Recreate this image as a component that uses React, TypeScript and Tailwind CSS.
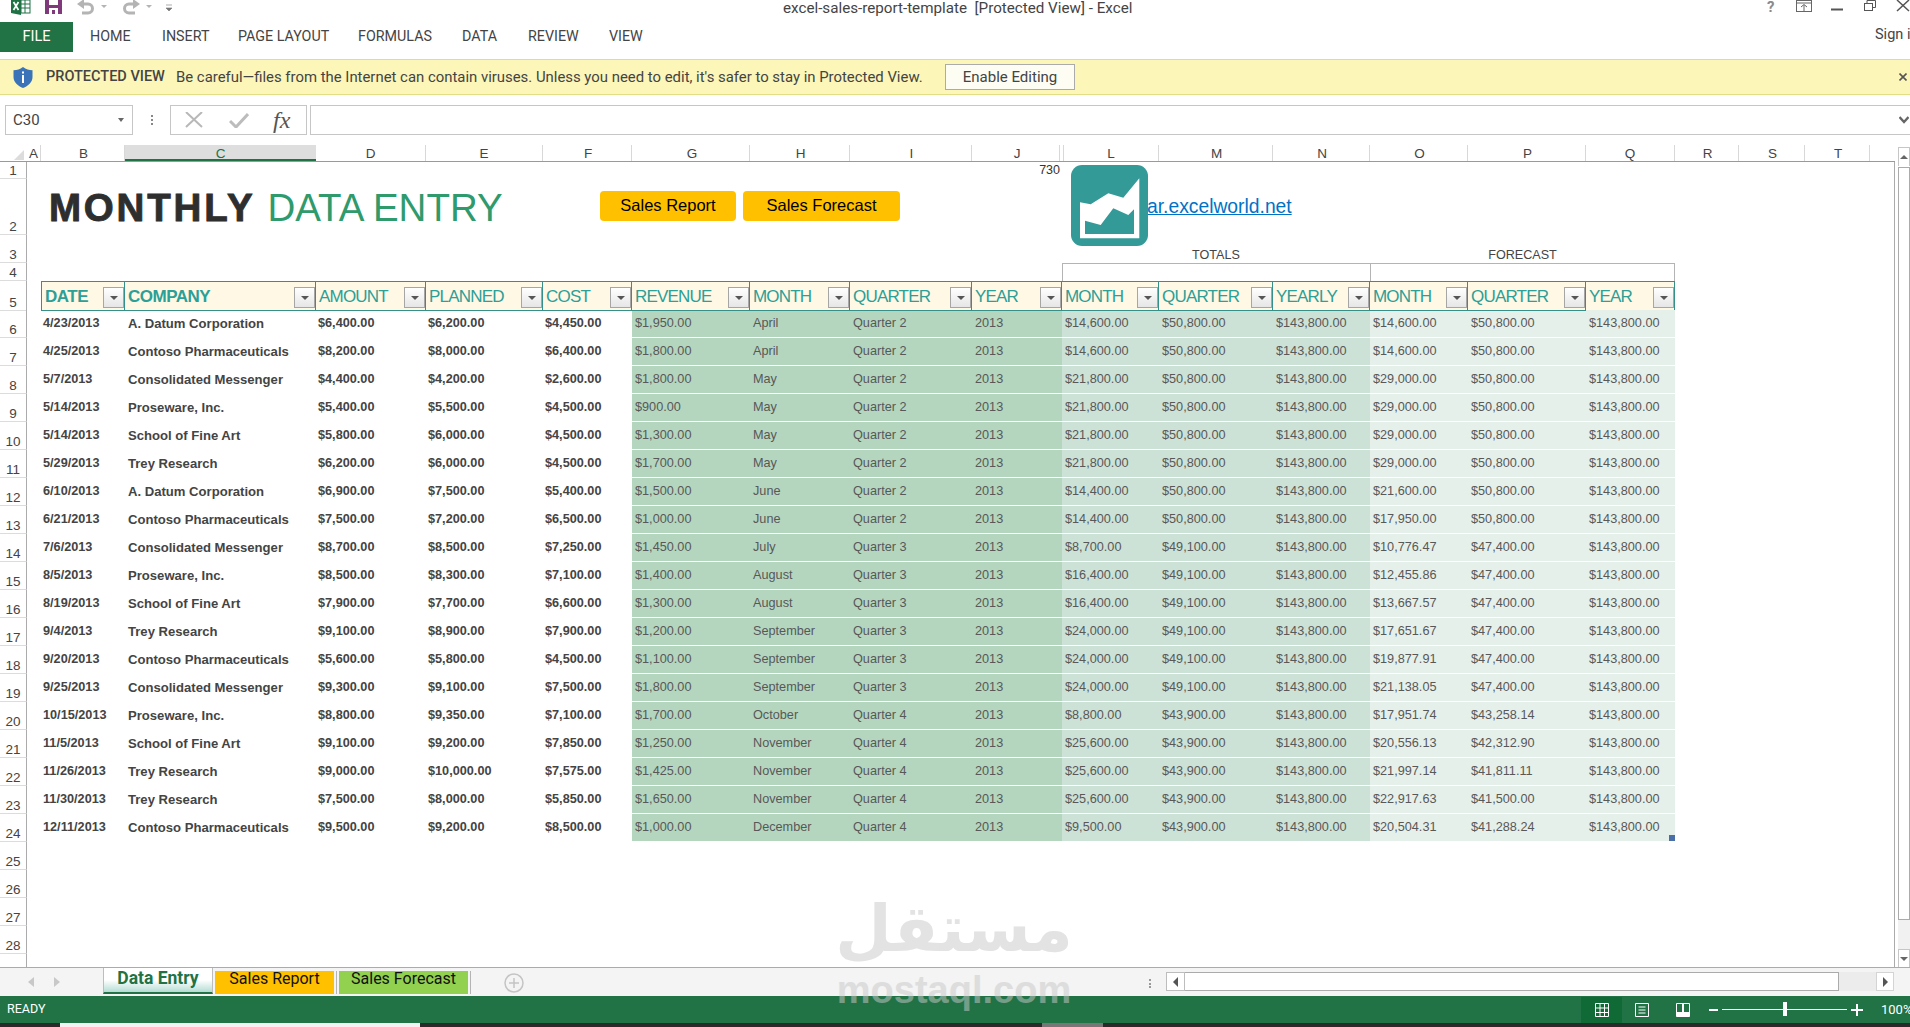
import React from "react";

const COLS = "grid grid-cols-[27px_14px_84px_191px_110px_117px_89px_118px_100px_122px_90px_97px_114px_97px_98px_118px_89px_64px_66px_65px_25px]";

const HEADS = [
  { l: "A", c: "w-[14px]" }, { l: "B", c: "w-[84px] pl-[2px]" }, { l: "C", c: "w-[191px]", sel: true }, { l: "D", c: "w-[110px]" },
  { l: "E", c: "w-[117px]" }, { l: "F", c: "w-[89px] pl-[2px]" }, { l: "G", c: "w-[118px] pl-[3px]" }, { l: "H", c: "w-[100px] pl-[2px]" },
  { l: "I", c: "w-[122px] pl-[2px]" }, { l: "J", c: "w-[88px] pl-[3px]" }, { l: "", c: "w-[4px]" }, { l: "L", c: "w-[95px]" },
  { l: "M", c: "w-[114px] pl-[2px]" }, { l: "N", c: "w-[97px] pl-[2px]" }, { l: "O", c: "w-[98px] pl-[2px]" }, { l: "P", c: "w-[118px] pl-[2px]" },
  { l: "Q", c: "w-[89px]" }, { l: "R", c: "w-[64px] pl-[2px]" }, { l: "S", c: "w-[66px] pl-[2px]" }, { l: "T", c: "w-[65px] pl-[2px]" },
];

const TH: [string, boolean][] = [
  ["DATE", true], ["COMPANY", true], ["AMOUNT", false], ["PLANNED", false], ["COST", false], ["REVENUE", false],
  ["MONTH", false], ["QUARTER", false], ["YEAR", false], ["MONTH", false], ["QUARTER", false], ["YEARLY", false],
  ["MONTH", false], ["QUARTER", false], ["YEAR", false],
];

const ROWS: string[][] = [
  ["4/23/2013", "A. Datum Corporation", "$6,400.00", "$6,200.00", "$4,450.00", "$1,950.00", "April", "Quarter 2", "$14,600.00", "$50,800.00", "$14,600.00", "$50,800.00"],
  ["4/25/2013", "Contoso Pharmaceuticals", "$8,200.00", "$8,000.00", "$6,400.00", "$1,800.00", "April", "Quarter 2", "$14,600.00", "$50,800.00", "$14,600.00", "$50,800.00"],
  ["5/7/2013", "Consolidated Messenger", "$4,400.00", "$4,200.00", "$2,600.00", "$1,800.00", "May", "Quarter 2", "$21,800.00", "$50,800.00", "$29,000.00", "$50,800.00"],
  ["5/14/2013", "Proseware, Inc.", "$5,400.00", "$5,500.00", "$4,500.00", "$900.00", "May", "Quarter 2", "$21,800.00", "$50,800.00", "$29,000.00", "$50,800.00"],
  ["5/14/2013", "School of Fine Art", "$5,800.00", "$6,000.00", "$4,500.00", "$1,300.00", "May", "Quarter 2", "$21,800.00", "$50,800.00", "$29,000.00", "$50,800.00"],
  ["5/29/2013", "Trey Research", "$6,200.00", "$6,000.00", "$4,500.00", "$1,700.00", "May", "Quarter 2", "$21,800.00", "$50,800.00", "$29,000.00", "$50,800.00"],
  ["6/10/2013", "A. Datum Corporation", "$6,900.00", "$7,500.00", "$5,400.00", "$1,500.00", "June", "Quarter 2", "$14,400.00", "$50,800.00", "$21,600.00", "$50,800.00"],
  ["6/21/2013", "Contoso Pharmaceuticals", "$7,500.00", "$7,200.00", "$6,500.00", "$1,000.00", "June", "Quarter 2", "$14,400.00", "$50,800.00", "$17,950.00", "$50,800.00"],
  ["7/6/2013", "Consolidated Messenger", "$8,700.00", "$8,500.00", "$7,250.00", "$1,450.00", "July", "Quarter 3", "$8,700.00", "$49,100.00", "$10,776.47", "$47,400.00"],
  ["8/5/2013", "Proseware, Inc.", "$8,500.00", "$8,300.00", "$7,100.00", "$1,400.00", "August", "Quarter 3", "$16,400.00", "$49,100.00", "$12,455.86", "$47,400.00"],
  ["8/19/2013", "School of Fine Art", "$7,900.00", "$7,700.00", "$6,600.00", "$1,300.00", "August", "Quarter 3", "$16,400.00", "$49,100.00", "$13,667.57", "$47,400.00"],
  ["9/4/2013", "Trey Research", "$9,100.00", "$8,900.00", "$7,900.00", "$1,200.00", "September", "Quarter 3", "$24,000.00", "$49,100.00", "$17,651.67", "$47,400.00"],
  ["9/20/2013", "Contoso Pharmaceuticals", "$5,600.00", "$5,800.00", "$4,500.00", "$1,100.00", "September", "Quarter 3", "$24,000.00", "$49,100.00", "$19,877.91", "$47,400.00"],
  ["9/25/2013", "Consolidated Messenger", "$9,300.00", "$9,100.00", "$7,500.00", "$1,800.00", "September", "Quarter 3", "$24,000.00", "$49,100.00", "$21,138.05", "$47,400.00"],
  ["10/15/2013", "Proseware, Inc.", "$8,800.00", "$9,350.00", "$7,100.00", "$1,700.00", "October", "Quarter 4", "$8,800.00", "$43,900.00", "$17,951.74", "$43,258.14"],
  ["11/5/2013", "School of Fine Art", "$9,100.00", "$9,200.00", "$7,850.00", "$1,250.00", "November", "Quarter 4", "$25,600.00", "$43,900.00", "$20,556.13", "$42,312.90"],
  ["11/26/2013", "Trey Research", "$9,000.00", "$10,000.00", "$7,575.00", "$1,425.00", "November", "Quarter 4", "$25,600.00", "$43,900.00", "$21,997.14", "$41,811.11"],
  ["11/30/2013", "Trey Research", "$7,500.00", "$8,000.00", "$5,850.00", "$1,650.00", "November", "Quarter 4", "$25,600.00", "$43,900.00", "$22,917.63", "$41,500.00"],
  ["12/11/2013", "Contoso Pharmaceuticals", "$9,500.00", "$9,200.00", "$8,500.00", "$1,000.00", "December", "Quarter 4", "$9,500.00", "$43,900.00", "$20,504.31", "$41,288.24"],
];

const TABS = [
  { t: "HOME", c: "w-[72px]" }, { t: "INSERT", c: "w-[76px]" }, { t: "PAGE LAYOUT", c: "w-[120px]" },
  { t: "FORMULAS", c: "w-[104px]" }, { t: "DATA", c: "w-[66px]" }, { t: "REVIEW", c: "w-[81px]" }, { t: "VIEW", c: "w-[50px]" },
];

function RowNum({ n }: { n: number | string }) {
  return (
    <div className="flex items-end justify-center border-r border-b border-r-[#ababab] border-b-[#dcdcdc] text-[13.5px] leading-[14px] text-[#444]">
      {n}
    </div>
  );
}

function FilterBtn() {
  return (
    <span className="absolute right-0 bottom-[2px] flex h-[21px] w-[21px] items-center justify-center border border-[#a6a6a6] bg-gradient-to-b from-white to-[#e6e6e6]">
      <span className="mt-[1px] h-0 w-0 border-x-[4px] border-t-[4px] border-x-transparent border-t-[#555]" />
    </span>
  );
}

function Cell({ children, bg, bold, wide }: { children?: React.ReactNode; bg?: string; bold?: boolean; wide?: boolean }) {
  return (
    <div
      className={`flex items-center overflow-visible whitespace-nowrap border-b border-white pt-[1px] ${wide ? "pl-[3px] text-[13.1px]" : bold ? "pl-[2px] text-[12.7px]" : "pl-[3px] text-[12.7px]"} ${bold ? "font-bold text-[#444]" : "font-normal text-[#585858]"} ${bg ?? ""}`}
    >
      {children}
    </div>
  );
}

function TitleBar() {
  return (
    <div className="flex h-[22px] items-start font-['Roboto',sans-serif]">
      <svg width="180" height="16" viewBox="0 0 180 16" className="shrink-0">
        <rect x="21" y="0" width="9" height="13" fill="#fff" stroke="#1f7244" />
        <path d="M21 4H30M21 8H30M25 0V13" stroke="#1f7244" strokeWidth="1" />
        <path d="M11 0H21V15L11 13Z" fill="#1f7244" />
        <path d="M13.5 2L18.5 10M18.5 2L13.5 10" stroke="#fff" strokeWidth="1.7" />
        <path d="M45 0H62V14H45Z" fill="#80397b" />
        <path d="M49 0H58V5H49Z" fill="#fff" />
        <path d="M49 8H58V14H49Z" fill="#fff" />
        <path d="M52 10H55V14H52Z" fill="#80397b" />
        <path d="M77 4L84 -1V9Z" fill="#b4b4b4" />
        <path d="M82 4H88A4.5 4.5 0 0 1 88 13H82" fill="none" stroke="#b4b4b4" strokeWidth="3" />
        <path d="M101 5H107L104 8Z" fill="#b4b4b4" />
        <path d="M140 4L133 -1V9Z" fill="#b4b4b4" />
        <path d="M135 4H129A4.5 4.5 0 0 0 129 13H135" fill="none" stroke="#b4b4b4" strokeWidth="3" />
        <path d="M146 5H152L149 8Z" fill="#b4b4b4" />
        <path d="M166 5H172M166 8H172L169 11Z" fill="#777" stroke="#777" strokeWidth="0.6" />
      </svg>
      <div className="ml-[603px] whitespace-pre text-[15.2px] leading-[16px] text-[#444]">excel-sales-report-template  [Protected View] - Excel</div>
      <svg width="150" height="16" viewBox="0 0 150 16" className="ml-auto shrink-0">
        <text x="7" y="12" fontFamily="Roboto, sans-serif" fontWeight="700" fontSize="15" fill="#8a8a8a">?</text>
        <rect x="36.5" y="0.5" width="15" height="11" fill="none" stroke="#666" />
        <path d="M37 3H51M44 11V5M41 7L44 4.5L47 7" fill="none" stroke="#666" />
        <path d="M71 9.5H83" stroke="#555" strokeWidth="2" />
        <rect x="104.5" y="3.5" width="8" height="7" fill="#fff" stroke="#555" />
        <path d="M107 3V0.5H115.5V7.5H113" fill="none" stroke="#555" />
        <path d="M137 0L149 11M149 0L137 11" stroke="#555" strokeWidth="1.5" />
      </svg>
    </div>
  );
}

function RibbonTabs() {
  return (
    <div className="flex h-[30px] items-center font-['Roboto',sans-serif] text-[14.3px] text-[#444]">
      <div className="mr-[17px] flex h-full w-[73px] items-center justify-center bg-[#217346] text-[14.5px] text-white">FILE</div>
      {TABS.map((t) => (
        <div key={t.t} className={`${t.c} whitespace-nowrap`}>{t.t}</div>
      ))}
      <div className="ml-auto w-[35px] overflow-hidden whitespace-nowrap text-[14.5px] -mt-[4px]">Sign in</div>
    </div>
  );
}

function ProtectedBar() {
  return (
    <div className="mt-[7px] flex h-[36px] items-center border-y border-[#e2de85] bg-[#fcf6b8] font-['Roboto',sans-serif] text-[14.9px] text-[#444]">
      <svg width="20" height="21" viewBox="0 0 20 21" className="ml-[13px] mr-[13px] shrink-0">
        <path d="M10 0C7 2.5 4 3 0.5 3.2V10C0.5 15.5 5 19 10 21C15 19 19.5 15.5 19.5 10V3.2C16 3 13 2.5 10 0Z" fill="#3b73b9" />
        <rect x="9" y="8" width="2" height="8" fill="#fff" />
        <rect x="9" y="4.5" width="2" height="2" fill="#fff" />
      </svg>
      <span className="w-[130px] text-[14.5px] font-medium whitespace-nowrap">PROTECTED VIEW</span>
      <span className="w-[769px] whitespace-nowrap">Be careful—files from the Internet can contain viruses. Unless you need to edit, it's safer to stay in Protected View.</span>
      <button className="flex h-[26px] w-[130px] items-center justify-center border border-[#ababab] bg-[#fdfdf3] text-[15px] text-[#444]">Enable Editing</button>
      <svg width="8" height="8" viewBox="0 0 8 8" className="ml-auto mr-[3px]">
        <path d="M0.5 0.5L7.5 7.5M7.5 0.5L0.5 7.5" stroke="#555" strokeWidth="1.6" />
      </svg>
    </div>
  );
}

function FormulaBar() {
  return (
    <div className="mt-[10px] flex h-[30px] font-['Roboto',sans-serif]">
      <div className="ml-[5px] flex w-[128px] items-center justify-between border border-[#c6c6c6] pl-[7px] pr-[8px] text-[15px] text-[#444]">
        C30
        <span className="h-0 w-0 border-x-[3.5px] border-t-[4px] border-x-transparent border-t-[#666]" />
      </div>
      <div className="flex w-[37px] flex-col items-center justify-center gap-[2px]">
        <span className="h-[2px] w-[2px] bg-[#888]" />
        <span className="h-[2px] w-[2px] bg-[#888]" />
        <span className="h-[2px] w-[2px] bg-[#888]" />
      </div>
      <div className="flex w-[137px] items-center border border-[#c6c6c6] pl-[13px]">
        <svg width="20" height="16" viewBox="0 0 20 16" className="mr-[25px]">
          <path d="M2 0L18 15M18 0L2 15" stroke="#b8b8b8" strokeWidth="2" />
        </svg>
        <svg width="20" height="16" viewBox="0 0 20 16" className="mr-[24px]">
          <path d="M1 9L7 15L19 2" fill="none" stroke="#bcbcbc" strokeWidth="3" />
        </svg>
        <span className="font-['Liberation_Serif',serif] text-[24px] italic leading-none text-[#555]">fx</span>
      </div>
      <div className="ml-[3px] flex flex-1 items-center justify-end border-y border-l border-[#c6c6c6] pr-[1px]">
        <svg width="10" height="8" viewBox="0 0 10 8">
          <path d="M0.5 1L5 6L9.5 1" fill="none" stroke="#666" strokeWidth="2.4" />
        </svg>
      </div>
    </div>
  );
}

function ColumnHeader() {
  return (
    <div className="flex h-[17px] border-b border-[#9a9a9a] text-[13.5px] leading-[17px] text-[#444]">
      <div className="relative w-[27px] shrink-0">
        <span className="absolute right-[3px] bottom-[1px] h-0 w-0 border-b-[10px] border-l-[10px] border-b-[#dcdcdc] border-l-transparent" />
      </div>
      {HEADS.map((h, i) =>
        h.sel ? (
          <div key={i} className={`${h.c} shrink-0 border-b-2 border-[#217346] bg-[#dedede] text-center text-[#217346]`}>{h.l}</div>
        ) : (
          <div key={i} className={`${h.c} shrink-0 border-r border-[#d8d8d8] text-center`}>{h.l}</div>
        )
      )}
    </div>
  );
}

function Logo() {
  return (
    <svg width="77" height="81" viewBox="0 0 77 81" className="absolute left-[1071px] top-[3px]">
      <rect width="77" height="81" rx="11" fill="#339a98" />
      <path d="M9 37.3L19.7 39.3L37.3 28.3L52.3 32.7L68.3 13.3V73.3H9Z" fill="#fff" />
      <path d="M14 55.7L29.7 60L42.3 43.3L57.3 50L63 44.3V69H14Z" fill="#339a98" />
    </svg>
  );
}

function Sheet() {
  const g = "bg-[#b4d6bf]";
  const l = "bg-[#cde2d6]";
  const f = "bg-[#e6f0ea]";
  return (
    <div className="relative flex-1 border-r border-[#ababab] font-['Liberation_Sans',sans-serif]">
      <Logo />
      <div className={`${COLS} h-[17px]`}>
        <RowNum n={1} />
        <div className="col-start-11 col-span-1 pr-[2px] text-right text-[12.5px] leading-[16px] text-[#333]">730</div>
      </div>
      <div className={`${COLS} h-[56px]`}>
        <RowNum n={2} />
        <div className="col-span-5 flex items-center whitespace-nowrap pl-[22px] pt-[3px] text-[38.5px] leading-none">
          <span className="font-bold tracking-[2.8px] text-[#2e2e2e] [-webkit-text-stroke:0.9px_#2e2e2e]">MONTHLY</span>
          <span className="ml-[12px] text-[#2f9a6c]">DATA ENTRY</span>
        </div>
        <div className="col-span-4 flex items-center gap-[7px] pb-[3px] pl-[57px] text-[16.5px] text-black">
          <button className="flex h-[30px] w-[136px] shrink-0 items-center justify-center rounded-[4px] bg-[#ffc000]">Sales Report</button>
          <button className="flex h-[30px] w-[157px] shrink-0 items-center justify-center rounded-[4px] bg-[#ffc000]">Sales Forecast</button>
        </div>
        <div className="col-start-12 col-span-3 flex items-center pl-[85px] pt-[1px] text-[19.3px] text-[#0072c6] underline">ar.excelworld.net</div>
      </div>
      <div className={`${COLS} h-[28px]`}>
        <RowNum n={3} />
        <div className="col-start-12 col-span-3 flex items-end justify-center text-[12.6px] leading-[16px] text-[#444]">TOTALS</div>
        <div className="col-span-3 flex items-end justify-center text-[12.6px] leading-[16px] text-[#444]">FORECAST</div>
      </div>
      <div className={`${COLS} h-[18px]`}>
        <RowNum n={4} />
        <div className="col-start-12 col-span-3 border-t border-l border-[#b4b4b4]" />
        <div className="col-span-3 border-x border-t border-[#b4b4b4]" />
      </div>
      <div className={`${COLS} h-[29px]`}>
        <RowNum n={5} />
        <div />
        {TH.map(([t, b], i) => (
          <div
            key={i}
            className={`relative flex items-center whitespace-nowrap border-y border-r border-[#35908a] bg-[#fff8e5] pl-[3px] pt-[2px] text-[17px] text-[#2c9f97] ${i === 0 ? "border-l" : ""} ${b ? "font-bold tracking-[-0.5px]" : "tracking-[-0.8px]"}`}
          >
            {t}
            <FilterBtn />
          </div>
        ))}
      </div>
      {ROWS.map((r, i) => (
        <div key={i} className={`${COLS} h-[28px]`}>
          <RowNum n={i + 6} />
          <div />
          <Cell bold>{r[0]}</Cell>
          <Cell bold wide>{r[1]}</Cell>
          <Cell bold>{r[2]}</Cell>
          <Cell bold>{r[3]}</Cell>
          <Cell bold>{r[4]}</Cell>
          <Cell bg={g}>{r[5]}</Cell>
          <Cell bg={g}>{r[6]}</Cell>
          <Cell bg={g}>{r[7]}</Cell>
          <Cell bg={g}>2013</Cell>
          <Cell bg={l}>{r[8]}</Cell>
          <Cell bg={l}>{r[9]}</Cell>
          <Cell bg={l}>$143,800.00</Cell>
          <Cell bg={f}>{r[10]}</Cell>
          <Cell bg={f}>{r[11]}</Cell>
          <div className={`relative flex items-center whitespace-nowrap border-b border-white pl-[3px] pt-[1px] text-[12.7px] text-[#585858] ${f}`}>
            $143,800.00
            {i === ROWS.length - 1 && <span className="absolute right-0 bottom-0 h-[6px] w-[6px] bg-[#4a6fa8]" />}
          </div>
        </div>
      ))}
      {[25, 26, 27, 28].map((n) => (
        <div key={n} className={`${COLS} h-[28px]`}>
          <RowNum n={n} />
        </div>
      ))}
      <div className="h-[13px] w-[27px] border-r border-[#ababab]" />
    </div>
  );
}

function VScroll() {
  return (
    <div className="ml-[3px] flex w-[12px] flex-col pt-[2px]">
      <div className="flex h-[19px] items-center justify-center border-x border-t border-[#c6c6c6]">
        <span className="h-0 w-0 border-x-[4px] border-b-[4px] border-x-transparent border-b-[#666]" />
      </div>
      <div className="mt-[1px] h-[753px] border border-[#ababab] bg-white" />
      <div className="h-[29px] bg-[#f1f1f1]" />
      <div className="flex h-[18px] items-center justify-center border-x border-t border-[#c6c6c6] bg-white">
        <span className="h-0 w-0 border-x-[4px] border-t-[4px] border-x-transparent border-t-[#666]" />
      </div>
    </div>
  );
}

function SheetTabs() {
  return (
    <div className="flex h-[29px] border-t border-[#ababab] bg-[#f3f4f3] font-['Roboto',sans-serif] text-[16px]">
      <div className="flex w-[103px] items-center gap-[20px] pl-[28px]">
        <span className="h-0 w-0 border-y-[5px] border-r-[6px] border-y-transparent border-r-[#c8c8c8]" />
        <span className="h-0 w-0 border-y-[5px] border-l-[6px] border-y-transparent border-l-[#c8c8c8]" />
      </div>
      <div className="flex h-[26px] w-[110px] items-start justify-center border-x border-b-2 border-x-[#bdbdbd] border-b-[#217346] bg-gradient-to-b from-white via-white to-[#b4dcd4] text-[17.5px] font-bold leading-[21px] text-[#217346]">Data Entry</div>
      <div className="ml-[2px] mt-[3px] flex h-[23px] w-[119px] items-start justify-center bg-[#ffc000] leading-[16px] text-[#111]">Sales Report</div>
      <div className="mx-[2px] mt-[3px] h-[23px] w-px bg-[#b4b4b4]" />
      <div className="mt-[3px] flex h-[23px] w-[129px] items-start justify-center bg-[#92d050] leading-[16px] text-[#111]">Sales Forecast</div>
      <div className="ml-[2px] mt-[3px] h-[23px] w-px bg-[#b4b4b4]" />
      <svg width="20" height="20" viewBox="0 0 20 20" className="ml-[33px] mt-[5px]">
        <circle cx="10" cy="10" r="9" fill="none" stroke="#c4c4c4" strokeWidth="1.5" />
        <path d="M10 5V15M5 10H15" stroke="#c4c4c4" strokeWidth="1.5" />
      </svg>
      <div className="ml-[625px] mt-[11px] flex h-[9px] w-[2px] flex-col justify-between">
        <span className="h-[2px] w-[2px] bg-[#999]" />
        <span className="h-[2px] w-[2px] bg-[#999]" />
        <span className="h-[2px] w-[2px] bg-[#999]" />
      </div>
      <div className="ml-[15px] mt-[4px] flex h-[19px] w-[728px]">
        <div className="flex w-[19px] items-center justify-center border border-[#bdbdbd] bg-white">
          <span className="h-0 w-0 border-y-[5px] border-r-[5px] border-y-transparent border-r-[#555]" />
        </div>
        <div className="w-[654px] border-y border-r border-[#ababab] bg-white" />
        <div className="w-[37px] bg-[#ececec]" />
        <div className="flex w-[18px] items-center justify-center border border-[#d4d4d4] bg-white">
          <span className="h-0 w-0 border-y-[5px] border-l-[5px] border-y-transparent border-l-[#555]" />
        </div>
      </div>
    </div>
  );
}

function StatusBar() {
  return (
    <div className="flex h-[27px] items-center bg-[#217346] font-['Roboto',sans-serif] text-[12.5px] text-white">
      <span className="ml-[7px]">READY</span>
      <div className="ml-auto flex h-full items-center">
        <div className="flex h-[26px] w-[41px] items-center justify-center bg-[#0f6a35]">
          <svg width="14" height="14" viewBox="0 0 14 14"><path d="M0.5 0.5H13.5V13.5H0.5ZM0.5 5H13.5M0.5 9.5H13.5M5 0.5V13.5M9.5 0.5V13.5" fill="none" stroke="#fff" /></svg>
        </div>
        <svg width="14" height="14" viewBox="0 0 14 14" className="ml-[13px]"><path d="M0.5 0.5H13.5V13.5H0.5ZM3.5 4H10.5M3.5 7H10.5M3.5 10H10.5" fill="none" stroke="#fff" /></svg>
        <svg width="14" height="14" viewBox="0 0 14 14" className="ml-[27px]"><path d="M0.5 0.5H13.5V13.5H0.5Z" fill="none" stroke="#fff" /><path d="M0.5 9H13.5V13.5H0.5ZM6 0.5H8V9H6Z" fill="#fff" /></svg>
        <span className="ml-[19px] h-[2px] w-[9px] bg-white" />
        <div className="relative ml-[4px] h-[1px] w-[125px] bg-white">
          <span className="absolute left-[61px] top-[-7px] h-[14px] w-[4px] bg-white" />
        </div>
        <svg width="12" height="12" viewBox="0 0 12 12" className="ml-[4px]"><path d="M6 0V12M0 6H12" stroke="#fff" strokeWidth="2" /></svg>
        <span className="ml-[18px] w-[29px] overflow-hidden whitespace-nowrap text-[13px]">100%</span>
      </div>
    </div>
  );
}

export default function App() {
  return (
    <div className="relative flex h-[1027px] w-[1910px] flex-col overflow-hidden bg-white">
      <TitleBar />
      <RibbonTabs />
      <ProtectedBar />
      <FormulaBar />
      <div className="mt-[10px] flex h-[822px]">
        <div className="flex w-[1895px] flex-col font-['Liberation_Sans',sans-serif]">
          <ColumnHeader />
          <Sheet />
        </div>
        <VScroll />
      </div>
      <SheetTabs />
      <StatusBar />
      <div className="flex h-[4px] bg-[#2a2a2a]">
        <div className="ml-[60px] w-[360px] bg-[#f2f2f2]" />
        <div className="ml-[622px] w-[61px] bg-[#777]" />
      </div>
      <div className="pointer-events-none absolute left-[838px] top-[885px] flex w-[232px] flex-col items-center text-[#c8c8c8] opacity-50">
        <span className="font-['DejaVu_Sans',sans-serif] text-[65px] font-bold leading-[88px]">مستقل</span>
        <span className="-mt-[2px] font-['Liberation_Sans',sans-serif] text-[38px] font-bold leading-[38px]">mostaql.com</span>
      </div>
    </div>
  );
}
